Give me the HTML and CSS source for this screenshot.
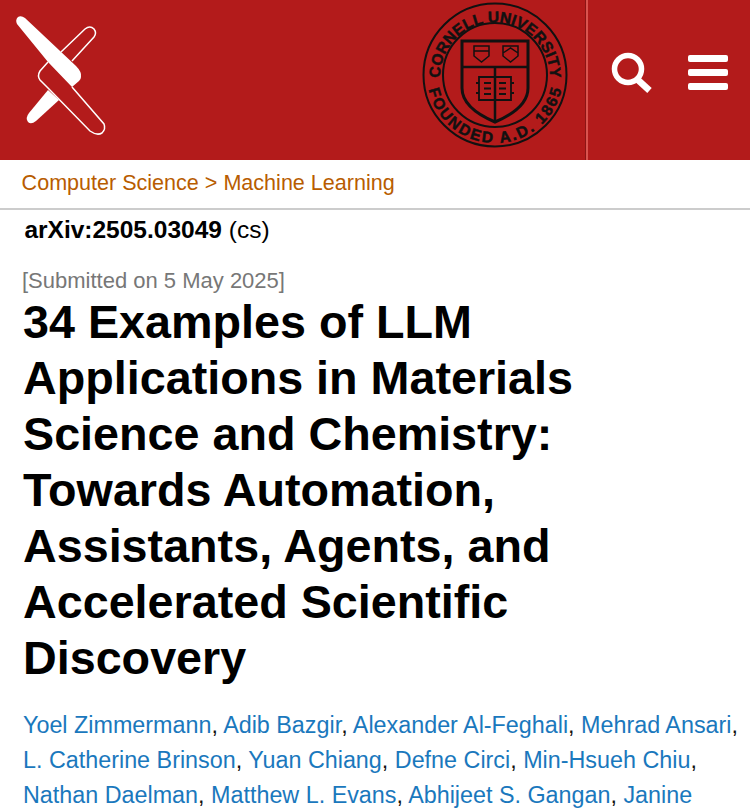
FILE: index.html
```html
<!DOCTYPE html>
<html lang="en">
<head>
<meta charset="utf-8">
<title>34 Examples of LLM Applications in Materials Science and Chemistry</title>
<link rel="stylesheet" href="styles.css">
</head>
<body>
<header class="top">
  <a class="logo" href="#" aria-label="arXiv">
    <svg width="130" height="160" viewBox="0 0 130 160">
      <path class="fill" d="M17 24Q15 20 18 17Q21 15 25 18L76 66Q82 72 81 77Q81 79 79 81L72 87L48 62Z"/>
      <path class="fill" d="M48 90L59 100L36 121Q31 125 28 122Q25 118 29 113Z"/>
      <path class="line" d="M48 62L40 71Q37 76 40 80L48 88L90 131Q97 136 102 133Q106 129 104 124L72 87"/>
      <path class="line" d="M61 52L85 29Q90 25 94 29Q97 33 94 37L72 61"/>
    </svg>
  </a>
  <div class="seal">
    <svg width="150" height="150" viewBox="0 0 150 150">
      <defs>
        <path id="arc-top" d="M20.200 82A55 55 0 1 1 129.800 82"/>
        <path id="arc-bottom" d="M7 75A68 68 0 0 0 143 75"/>
      </defs>
      <circle class="ring" cx="75" cy="75" r="71.500"/>
      <circle class="ring" cx="75" cy="75" r="52"/>
      <text class="seal-text"><textPath href="#arc-top" startOffset="50%" text-anchor="middle" textLength="174">CORNELL UNIVERSITY</textPath></text>
      <text class="seal-text"><textPath href="#arc-bottom" startOffset="50%" text-anchor="middle" textLength="184">FOUNDED A.D. 1865</textPath></text>
      <path class="shield" d="M42 41H108V88Q108 108 75 122Q42 108 42 88Z"/>
      <path class="band" d="M42 67H108M75 67V122"/>
      <path class="ring thin" d="M54 46H69V56L61.500 62L54 56ZM54 51H69"/>
      <path class="ring thin" d="M83 46H98V56L90.500 62L83 56ZM83 53L90.500 48L98 53"/>
      <path class="ring book" d="M59 77H91V100H59ZM75 77V100M64 83H71M64 88.500H71M64 94H71M79 83H86M79 88.500H86M79 94H86M56 83H59M56 93H59M91 83H94M91 93H94"/>
    </svg>
  </div>
  <div class="tools">
    <svg class="search" width="44" height="44" viewBox="0 0 44 44">
      <circle cx="20" cy="20" r="13.500"/>
      <path class="handle" d="M30 31L41.500 41.500"/>
    </svg>
    <div class="burger"><span></span><span></span><span></span></div>
  </div>
</header>
<nav class="crumbs"><a href="#">Computer Science</a> &gt; <a href="#">Machine Learning</a></nav>
<main class="paper">
  <div class="ident"><b>arXiv:2505.03049</b> (cs)</div>
  <div class="dateline">[Submitted on 5 May 2025]</div>
  <h1 class="title">34 Examples of LLM Applications in Materials Science and Chemistry: Towards Automation, Assistants, Agents, and Accelerated Scientific Discovery</h1>
  <div class="authors"><a href="#">Yoel Zimmermann</a>, <a href="#">Adib Bazgir</a>, <a href="#">Alexander Al-Feghali</a>, <a href="#">Mehrad Ansari</a>, <a href="#">L. Catherine Brinson</a>, <a href="#">Yuan Chiang</a>, <a href="#">Defne Circi</a>, <a href="#">Min-Hsueh Chiu</a>, <a href="#">Nathan Daelman</a>, <a href="#">Matthew L. Evans</a>, <a href="#">Abhijeet S. Gangan</a>, <a href="#">Janine George</a></div>
</main>
</body>
</html>
```
FILE: styles.css
```css
html, body {
  margin: 0;
  padding: 0;
  height: 812px;
  overflow: hidden;
  background: #fff;
  font-family: "Liberation Sans", Arial, sans-serif;
}
a { text-decoration: none; color: inherit; }
.top {
  display: flex;
  align-items: flex-start;
  height: 160px;
  background: #b31b1b;
}
.logo { display: block; height: 160px; }
.logo svg { display: block; }
.fill { fill: #fff; }
.line { fill: none; stroke: #fff; stroke-width: 1.500; }
.seal { margin-left: auto; }
.seal svg { display: block; }
.ring { fill: none; stroke: #111; stroke-width: 2; }
.thin { stroke-width: 1.500; }
.book { stroke-width: 1.800; }
.band { fill: none; stroke: #111; stroke-width: 2.500; }
.shield { fill: none; stroke: #111; stroke-width: 3; }
.seal-text {
  fill: #111;
  stroke: #111;
  stroke-width: 0.500px;
  font: bold 15.500px "Liberation Sans", Arial, sans-serif;
}
.tools {
  display: flex;
  width: 164px;
  height: 160px;
  margin-left: 16px;
  box-sizing: border-box;
  border-left: 2px solid #d9534f;
  box-shadow: -1px 0 0 #8c1515;
  padding: 49px 22px 0 20px;
  justify-content: space-between;
}
.search { fill: none; stroke: #fff; stroke-width: 5.500; overflow: visible; }
.handle { stroke-width: 6.500; }
.burger {
  display: flex;
  flex-direction: column;
  gap: 7px;
  width: 40px;
  margin-top: 6px;
}
.burger span {
  display: block;
  height: 7px;
  border-radius: 2px;
  background: #fff;
}
.crumbs {
  height: 48px;
  padding-left: 21.600px;
  font-size: 21.550px;
  line-height: 46px;
  color: #b85c00;
  border-bottom: 2px solid #ccc;
}
.paper { padding: 0 0 0 23px; }
.ident {
  margin-left: 1.400px;
  font-size: 24.500px;
  line-height: 40px;
  color: #000;
}
.dateline {
  margin: 17px 0 -1px -1px;
  font-size: 22px;
  line-height: 28px;
  color: #777;
}
.title {
  margin: 0;
  font-size: 46.700px;
  line-height: 56px;
  font-weight: bold;
  color: #000;
  width: 600px;
}
.authors {
  margin-top: 21.600px;
  font-size: 23.330px;
  line-height: 35.200px;
  color: #111;
  width: 722px;
}
.authors a { color: #1a78bd; }
```
